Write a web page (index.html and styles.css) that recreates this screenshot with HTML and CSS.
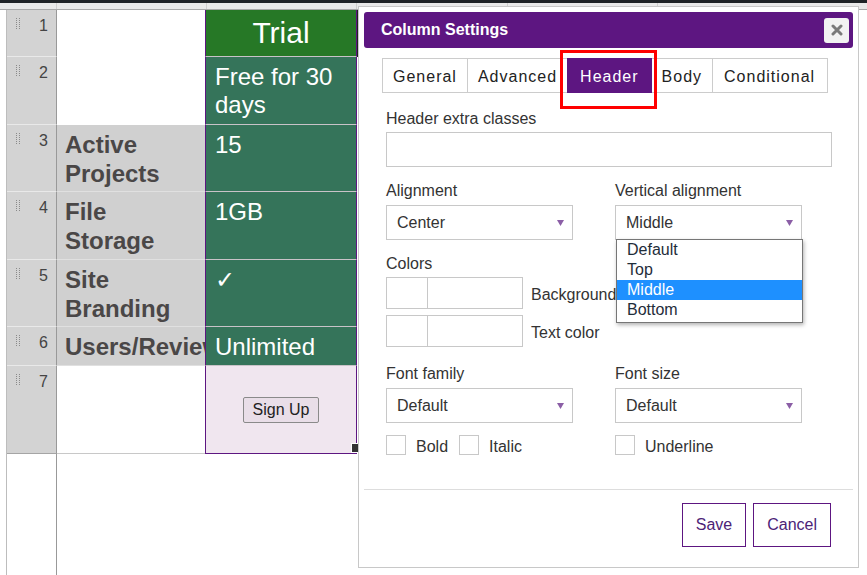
FILE: index.html
```html
<!DOCTYPE html>
<html>
<head>
<meta charset="utf-8">
<title>Column Settings</title>
<link rel="stylesheet" href="styles.css">
</head>
<body>
<div class="topbar"></div>
<div class="colheads">
  <div class="ch ch-corner"></div>
  <div class="ch ch-num"></div>
  <div class="ch ch-a"></div>
  <div class="ch ch-b"></div>
  <div class="ch ch-c"></div>
  <div class="ch ch-d"></div>
</div>
<div class="sheet">
  <div class="num"><span class="grip"></span><span>1</span></div>
  <div class="a white"></div>
  <div class="b trial">Trial</div>
  <div class="c c-dark"></div>

  <div class="num"><span class="grip"></span><span>2</span></div>
  <div class="a white"></div>
  <div class="b green">Free for 30 days</div>
  <div class="c"></div>

  <div class="num"><span class="grip"></span><span>3</span></div>
  <div class="a gray">Active Projects</div>
  <div class="b green">15</div>
  <div class="c"></div>

  <div class="num"><span class="grip"></span><span>4</span></div>
  <div class="a gray">File Storage</div>
  <div class="b green">1GB</div>
  <div class="c"></div>

  <div class="num"><span class="grip"></span><span>5</span></div>
  <div class="a gray">Site Branding</div>
  <div class="b green">&#10003;</div>
  <div class="c"></div>

  <div class="num"><span class="grip"></span><span>6</span></div>
  <div class="a gray nowrap">Users/Reviewers</div>
  <div class="b green">Unlimited</div>
  <div class="c"></div>

  <div class="num last"><span class="grip"></span><span>7</span></div>
  <div class="a last"></div>
  <div class="b signup"><button class="signup-btn">Sign Up</button><span class="handle"></span></div>
  <div class="c"></div>

  <div class="num filler"></div>
  <div class="a filler"></div>
  <div class="b-filler"></div>
  <div class="c"></div>
</div>

<div class="dialog">
  <div class="dlg-title">
    <span>Column Settings</span>
    <span class="close"><svg width="12" height="12" viewBox="0 0 12 12"><path d="M2 2 L10 10 M10 2 L2 10" stroke="#7a7a7a" stroke-width="3" stroke-linecap="round"/></svg></span>
  </div>
  <div class="dlg-body">
    <div class="tabs">
      <div class="tab">General</div>
      <div class="tab">Advanced</div>
      <div class="tab active">Header</div>
      <div class="tab">Body</div>
      <div class="tab">Conditional</div>
    </div>
    <div class="form">
      <div class="row-hdr">
        <div class="lbl">Header extra classes</div>
        <div class="text-input"></div>
      </div>
      <div class="pair row-align">
        <div class="field">
          <div class="lbl lbl-3">Alignment</div>
          <div class="select"><span>Center</span><svg class="caret" width="7" height="6" viewBox="0 0 7 6"><polygon points="0,0 7,0 3.5,6" fill="#8b5ea6"/></svg></div>
        </div>
        <div class="field valign">
          <div class="lbl lbl-3">Vertical alignment</div>
          <div class="select"><span>Middle</span><svg class="caret" width="7" height="6" viewBox="0 0 7 6"><polygon points="0,0 7,0 3.5,6" fill="#8b5ea6"/></svg></div>
          <ul class="options">
            <li>Default</li>
            <li>Top</li>
            <li class="sel">Middle</li>
            <li>Bottom</li>
          </ul>
        </div>
      </div>
      <div class="colors">
        <div class="lbl">Colors</div>
        <div class="color-row"><div class="swatch"><span class="sw-a"></span></div><span class="color-lbl">Background</span></div>
        <div class="color-row"><div class="swatch"><span class="sw-a"></span></div><span class="color-lbl">Text color</span></div>
      </div>
      <div class="pair row-font">
        <div class="field">
          <div class="lbl lbl-3">Font family</div>
          <div class="select"><span>Default</span><svg class="caret" width="7" height="6" viewBox="0 0 7 6"><polygon points="0,0 7,0 3.5,6" fill="#8b5ea6"/></svg></div>
        </div>
        <div class="field">
          <div class="lbl lbl-3">Font size</div>
          <div class="select"><span>Default</span><svg class="caret" width="7" height="6" viewBox="0 0 7 6"><polygon points="0,0 7,0 3.5,6" fill="#8b5ea6"/></svg></div>
        </div>
      </div>
      <div class="pair row-checks">
        <div class="checks">
          <span class="check"><span class="box"></span><span class="check-txt">Bold</span></span>
          <span class="check"><span class="box"></span><span class="check-txt">Italic</span></span>
        </div>
        <div class="checks">
          <span class="check"><span class="box"></span><span class="check-txt">Underline</span></span>
        </div>
      </div>
    </div>
  </div>
  <div class="dlg-footer">
    <button class="btn">Save</button>
    <button class="btn">Cancel</button>
  </div>
  <div class="highlight"></div>
</div>
</body>
</html>
```

FILE: styles.css
```css
* {
  box-sizing: border-box;
  margin: 0;
  padding: 0;
}

body {
  width: 867px;
  height: 575px;
  overflow: hidden;
  position: relative;
  background: #fff;
  font-family: "Liberation Sans", Arial, sans-serif;
  color: #333;
}

.topbar {
  height: 3px;
  background: #1f2327;
}

.colheads {
  display: flex;
  height: 7px;
  background: #e9e9e9;
  border-bottom: 1px solid #a9a9a9;
}

.ch {
  height: 100%;
  border-right: 1px solid #cfcfcf;
}

.ch-corner { width: 7px; border-right: none; }
.ch-num { width: 50px; }
.ch-a { width: 150px; }
.ch-b { width: 150px; }
.ch-c { width: 151px; }
.ch-d { width: 150px; }

.sheet {
  margin-left: 6px;
  border-left: 1px solid #bdbdbd;
  height: 565px;
  display: grid;
  grid-template-columns: 50px 148px 152px 1fr;
  grid-template-rows: 47px 68px 67px 68px 67px 39px 88px 1fr;
}

.num {
  background: #d3d3d3;
  border-right: 1px solid #999;
  border-bottom: 1px solid #e9e9e9;
  display: flex;
  justify-content: space-between;
  align-items: flex-start;
  padding: 7px 8px 0 9px;
  font-size: 16px;
  line-height: 18px;
  color: #444;
}

.num.last {
  border-bottom-color: #a5a5a5;
}

.num.filler {
  background: #fff;
  border-bottom: none;
}

.grip {
  width: 4px;
  height: 11px;
  margin-top: 1px;
  border-left: 1px dotted #8a8a8a;
  border-right: 1px dotted #8a8a8a;
}

.a {
  padding: 5px 8px;
  font-size: 24px;
  line-height: 29px;
  font-weight: bold;
  color: #4a4747;
  overflow: hidden;
}

.a.white {
  background: #fff;
}

.a.gray {
  background: #d0d0d0;
  border-bottom: 1px solid #e0e0e0;
}

.a.nowrap {
  white-space: nowrap;
}

.a.last {
  border-bottom: 1px solid #c8c8c8;
}

.b {
  border-left: 1px solid #5d1681;
  border-right: 1px solid #5d1681;
}

.b.trial {
  background: #267826;
  color: #fff;
  font-size: 30px;
  line-height: 46px;
  text-align: center;
  border-bottom: 1px solid #c9c3c8;
}

.b.green {
  background: #35745a;
  color: #fff;
  font-size: 24px;
  line-height: 28px;
  padding: 6px 9px;
  border-bottom: 1px solid #c9c3c8;
}

.b.signup {
  background: #f0e6ef;
  border-bottom: 1px solid #5d1681;
  display: flex;
  align-items: center;
  justify-content: center;
  position: relative;
}

.signup-btn {
  font-family: "Liberation Sans", Arial, sans-serif;
  font-size: 16px;
  line-height: 18px;
  color: #222;
  background: #e9dee8;
  border: 1px solid #8a8a8a;
  border-radius: 2px;
  padding: 3px 9px;
}

.handle {
  position: absolute;
  right: -2px;
  bottom: 1px;
  width: 6px;
  height: 8px;
  background: #333;
  box-shadow: 0 0 0 1px #fff;
}

.c-dark {
  border-left: 2px solid #222;
}

.dialog {
  position: absolute;
  left: 358px;
  top: 6px;
  width: 501px;
  background: #fff;
  border: 1px solid #c8c8c8;
  padding: 5px;
  z-index: 5;
}

.dlg-title {
  height: 36px;
  background: #5d1681;
  border-radius: 3px;
  display: flex;
  align-items: center;
  justify-content: space-between;
  padding: 0 4px 0 17px;
  color: #fff;
  font-size: 16px;
  font-weight: bold;
}

.close {
  width: 25px;
  height: 25px;
  background: #f2f2f2;
  border-radius: 3px;
  display: flex;
  align-items: center;
  justify-content: center;
}

.dlg-body {
  padding: 10px 0 0 18px;
}

.tabs {
  display: flex;
  height: 35px;
}

.tab {
  border: 1px solid #ccc;
  margin-left: -1px;
  padding: 2px 10px 0 10px;
  line-height: 31px;
  font-size: 16px;
  letter-spacing: 1px;
  color: #222;
}

.tab:first-child {
  margin-left: 0;
}

.tab:last-child {
  padding-right: 12px;
  padding-left: 11px;
}

.tab.active {
  background: #5d1681;
  border-color: #5d1681;
  color: #fff;
  padding: 2px 12px 0 12px;
  position: relative;
  z-index: 1;
}

.form {
  padding-left: 4px;
  font-size: 16px;
  color: #333;
}

.lbl {
  line-height: 22px;
  margin-bottom: 2px;
}

.lbl-3 {
  margin-bottom: 3px;
}

.row-hdr {
  margin-top: 15px;
}

.text-input {
  width: 446px;
  height: 35px;
  border: 1px solid #c8c8c8;
}

.pair {
  display: grid;
  grid-template-columns: 187px 187px;
  column-gap: 42px;
}

.row-align { margin-top: 13px; }
.row-font { margin-top: 16px; }
.row-checks { margin-top: 12px; }

.field {
  position: relative;
}

.select {
  height: 35px;
  border: 1px solid #c8c8c8;
  display: flex;
  align-items: center;
  justify-content: space-between;
  padding: 0 8px 0 10px;
  line-height: 18px;
  color: #333;
}

.options {
  position: absolute;
  left: 1px;
  top: 59px;
  width: 187px;
  list-style: none;
  background: #fff;
  border: 1px solid #767676;
  padding-bottom: 2px;
  box-shadow: 1px 2px 4px rgba(0, 0, 0, 0.3);
  z-index: 3;
}

.options li {
  line-height: 20px;
  padding-left: 10px;
  color: #1f2d3a;
}

.options li.sel {
  background: #1e90ff;
  color: #fff;
}

.colors {
  margin-top: 13px;
}

.color-row {
  display: flex;
  align-items: center;
  margin-bottom: 6px;
}

.color-row:last-child {
  margin-bottom: 0;
}

.swatch {
  width: 137px;
  height: 32px;
  border: 1px solid #c8c8c8;
  display: flex;
}

.sw-a {
  width: 41px;
  border-right: 1px solid #c8c8c8;
}

.color-lbl {
  margin-left: 8px;
  padding-top: 4px;
}

.checks {
  display: flex;
  align-items: flex-start;
  height: 20px;
}

.check {
  display: flex;
  align-items: flex-start;
  margin-right: 11px;
  height: 20px;
}

.check-txt {
  padding-top: 3px;
  line-height: 17px;
}

.box {
  width: 20px;
  height: 20px;
  border: 1px solid #c8c8c8;
  margin-right: 10px;
}

.dlg-footer {
  margin-top: 34px;
  border-top: 1px solid #ddd;
  padding: 13px 22px 15px 0;
  display: flex;
  justify-content: flex-end;
  gap: 7px;
}

.btn {
  height: 44px;
  padding: 0 13px;
  border: 1px solid #5d1681;
  background: #fff;
  color: #4d2377;
  font-family: "Liberation Sans", Arial, sans-serif;
  font-size: 16px;
}

.highlight {
  position: absolute;
  left: 201px;
  top: 43px;
  width: 97px;
  height: 59px;
  border: 3px solid #ff0000;
  z-index: 6;
  pointer-events: none;
}
```
